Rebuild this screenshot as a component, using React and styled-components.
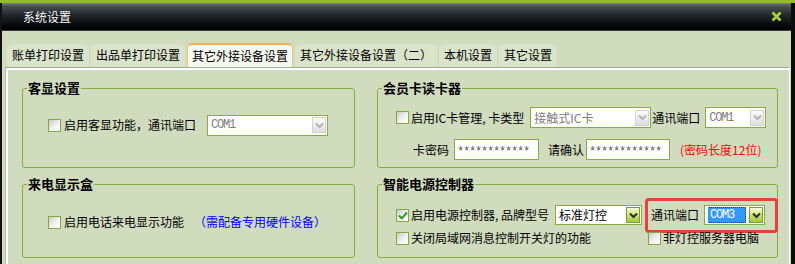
import React from 'react';
import styled, { createGlobalStyle } from 'styled-components';

const GlobalStyle = createGlobalStyle`
  html, body {
    margin: 0;
    padding: 0;
  }
  body {
    background: #93c020;
    font-family: "Noto Sans CJK SC", "Liberation Sans", sans-serif;
    font-size: 12px;
    color: #000;
    overflow: hidden;
  }
  * {
    box-sizing: border-box;
  }
`;

const Window = styled.div`
  margin-top: 3px;
  width: 795px;
  height: 261px;
  display: flex;
  flex-direction: column;
  background: #d0dcbd;
  border-left: 2px solid #111;
  border-right: 4px solid #0b0b0b;
`;

const TitleBar = styled.div`
  height: 28px;
  flex-shrink: 0;
  display: flex;
  align-items: center;
  justify-content: space-between;
  padding: 0 9px 1px 21px;
  background: linear-gradient(#7a7f83 0, #4a4f53 12%, #22272a 45%, #050607 85%, #000 100%);
  border-bottom: 1px solid #34393c;
  color: #fff;
  text-shadow: 0 0 1px #000;
`;

const Body = styled.div`
  flex: 1;
  display: flex;
  flex-direction: column;
  padding: 0 1px 0 3px;
`;

const TabBar = styled.div`
  display: flex;
  align-items: flex-end;
  gap: 2px;
  padding: 12px 0 0 2px;
`;

const Tab = styled.div`
  height: ${(p) => (p.$active ? '24px' : '23px')};
  padding: 0 ${(p) => (p.$active ? '4px' : '5px')};
  line-height: 22px;
  white-space: nowrap;
  border-radius: 5px 5px 0 0;
  background: ${(p) => (p.$active ? '#f5f8ee' : '#dae4ca')};
  border: ${(p) => (p.$active ? '1px solid #f0c37a' : 'none')};
  border-top: ${(p) => (p.$active ? '2px solid #f1b253' : 'none')};
  border-bottom: none;
`;

const Panel = styled.div`
  flex: 1;
  border-top: 1px solid #9ea796;
  border-left: 1px solid #b5bcab;
  border-right: 1px solid #fff;
  box-shadow: inset 2px 2px 0 #fff;
  padding: 20px 0 0 16px;
`;

const Grid = styled.div`
  display: grid;
  grid-template-columns: 333px 401px;
  grid-template-rows: 80px 74px;
  column-gap: 22px;
  row-gap: 16px;
`;

const Group = styled.div`
  border: 1px solid #89ad3a;
  border-radius: 3px;
`;

const Legend = styled.div`
  width: fit-content;
  margin: -9px 0 0 4px;
  padding: 0 1px;
  background: #d0dcbd;
  font-size: 13px;
  font-weight: 700;
  line-height: 16px;
`;

const GroupBody = styled.div`
  padding: ${(p) => p.$pad};
`;

const Row = styled.div`
  display: flex;
  align-items: center;
  height: ${(p) => p.$h || '20px'};
  margin-top: ${(p) => p.$mt || '0'};
  padding-left: ${(p) => p.$pl || '0'};
  white-space: nowrap;
`;

const Label = styled.span`
  margin-left: ${(p) => p.$ml || '0'};
  color: ${(p) => p.$color || '#000'};
  line-height: 16px;
`;

const Box = styled.span`
  width: 13px;
  height: 13px;
  flex-shrink: 0;
  display: flex;
  align-items: center;
  justify-content: center;
  margin-left: ${(p) => p.$ml || '0'};
  border: 1px solid #84a83a;
  background: linear-gradient(135deg, #c9c9c9 0%, #f2f2f2 55%, #fff 100%);
`;

const SelectBox = styled.div`
  width: ${(p) => p.$w};
  height: ${(p) => p.$h || '21px'};
  margin-left: ${(p) => p.$ml || '0'};
  flex-shrink: 0;
  display: flex;
  align-items: center;
  padding: 0 1px 0 3px;
  background: #fff;
  border: 1px solid #89ad3a;
`;

const SelectText = styled.span`
  flex: 1;
  color: ${(p) => (p.$disabled ? '#808080' : '#000')};
  font-family: ${(p) => (p.$mono ? '"Liberation Mono", monospace' : 'inherit')};
  font-size: 12px;
  letter-spacing: ${(p) => (p.$mono ? '-1.2px' : '0')};
  line-height: 16px;
  overflow: hidden;
`;

const Picked = styled.span`
  display: inline-block;
  padding: 0 3px;
  margin-left: -1px;
  width: 39px;
  background: #3399ff;
  color: #fff;
  outline: 1px dotted #1a3a6a;
  outline-offset: -1px;
`;

const DropButton = styled.span`
  width: 14px;
  height: 16px;
  flex-shrink: 0;
  display: flex;
  align-items: center;
  justify-content: center;
  border: 1px solid ${(p) => (p.$disabled ? '#d2d2d2' : '#7b9c33')};
  background: ${(p) =>
    p.$disabled
      ? 'linear-gradient(#fbfbfb, #dedede)'
      : 'linear-gradient(#f6fcdc, #c4e36c 55%, #a4cb3c)'};
`;

const Field = styled.div`
  width: ${(p) => p.$w};
  height: 21px;
  margin-left: ${(p) => p.$ml || '0'};
  padding: 4px 2px 0;
  display: flex;
  align-items: center;
  background: #fff;
  border: 1px solid #89ad3a;
  font-family: "Liberation Mono", monospace;
  font-size: 12px;
  letter-spacing: -1.2px;
  color: #555;
`;

const Highlight = styled.div`
  height: 35px;
  margin-left: 3px;
  padding: 0 10px 0 3px;
  display: flex;
  align-items: center;
  flex-shrink: 0;
  border: 3px solid #ea3f3c;
  border-radius: 4px;
`;

const Chevron = ({ color }) => (
  <svg width="9" height="7" viewBox="0 0 9 7">
    <path d="M1 1.5 L4.5 5 L8 1.5" fill="none" stroke={color} strokeWidth="2" />
  </svg>
);

const Check = ({ checked, ml }) => (
  <Box $ml={ml}>
    {checked && (
      <svg width="10" height="9" viewBox="0 0 10 9">
        <path d="M1 4.5 L3.8 7.3 L9 1.5" fill="none" stroke="#1f9b2c" strokeWidth="2" />
      </svg>
    )}
  </Box>
);

const Select = ({ w, h, ml, children, disabled, mono }) => (
  <SelectBox $w={w} $h={h} $ml={ml}>
    <SelectText $disabled={disabled} $mono={mono}>{children}</SelectText>
    <DropButton $disabled={disabled}>
      <Chevron color={disabled ? '#b4b4b4' : '#2e2e2e'} />
    </DropButton>
  </SelectBox>
);

const tabs = ['账单打印设置', '出品单打印设置', '其它外接设备设置', '其它外接设备设置（二）', '本机设置', '其它设置'];

export default function App() {
  return (
    <>
      <GlobalStyle />
      <Window>
        <TitleBar>
          <span>系统设置</span>
          <svg width="11" height="11" viewBox="0 0 11 11">
            <path d="M1.5 1.5 L9.5 9.5 M9.5 1.5 L1.5 9.5" stroke="#a6d23a" strokeWidth="2.6" />
          </svg>
        </TitleBar>
        <Body>
          <TabBar>
            {tabs.map((t, i) => (
              <Tab key={t} $active={i === 2}>{t}</Tab>
            ))}
          </TabBar>
          <Panel>
            <Grid>
              <Group>
                <Legend>客显设置</Legend>
                <GroupBody $pad="19px 0 0 25px">
                  <Row>
                    <Check />
                    <Label $ml="3px">启用客显功能，通讯端口</Label>
                    <Select w="121px" ml="11px" disabled mono>COM1</Select>
                  </Row>
                </GroupBody>
              </Group>

              <Group>
                <Legend>会员卡读卡器</Legend>
                <GroupBody $pad="11px 0 0 18px">
                  <Row $h="21px">
                    <Check />
                    <Label $ml="2px">启用IC卡管理, 卡类型</Label>
                    <Select w="121px" ml="6px" disabled>接触式IC卡</Select>
                    <Label $ml="1px">通讯端口</Label>
                    <Select w="61px" ml="5px" disabled mono>COM1</Select>
                  </Row>
                  <Row $h="21px" $mt="11px" $pl="17px">
                    <Label>卡密码</Label>
                    <Field $w="85px" $ml="5px">************</Field>
                    <Label $ml="9px">请确认</Label>
                    <Field $w="84px" $ml="2px">************</Field>
                    <Label $ml="10px" $color="#ff0000">(密码长度12位)</Label>
                  </Row>
                </GroupBody>
              </Group>

              <Group>
                <Legend>来电显示盒</Legend>
                <GroupBody $pad="20px 0 0 25px">
                  <Row>
                    <Check />
                    <Label $ml="3px">启用电话来电显示功能</Label>
                    <Label $ml="10px" $color="#0000ff">（需配备专用硬件设备）</Label>
                  </Row>
                </GroupBody>
              </Group>

              <Group>
                <Legend>智能电源控制器</Legend>
                <GroupBody $pad="13px 0 0 18px">
                  <Row>
                    <Check checked />
                    <Label $ml="2px">启用电源控制器, 品牌型号</Label>
                    <Select w="87px" h="20px" ml="6px">标准灯控</Select>
                    <Highlight>
                      <Label>通讯端口</Label>
                      <Select w="61px" h="20px" ml="5px" mono>
                        <Picked>COM3</Picked>
                      </Select>
                    </Highlight>
                  </Row>
                  <Row $h="16px" $mt="5px">
                    <Check />
                    <Label $ml="2px">关闭局域网消息控制开关灯的功能</Label>
                    <Check ml="57px" />
                    <Label $ml="2px">非灯控服务器电脑</Label>
                  </Row>
                </GroupBody>
              </Group>
            </Grid>
          </Panel>
        </Body>
      </Window>
    </>
  );
}
